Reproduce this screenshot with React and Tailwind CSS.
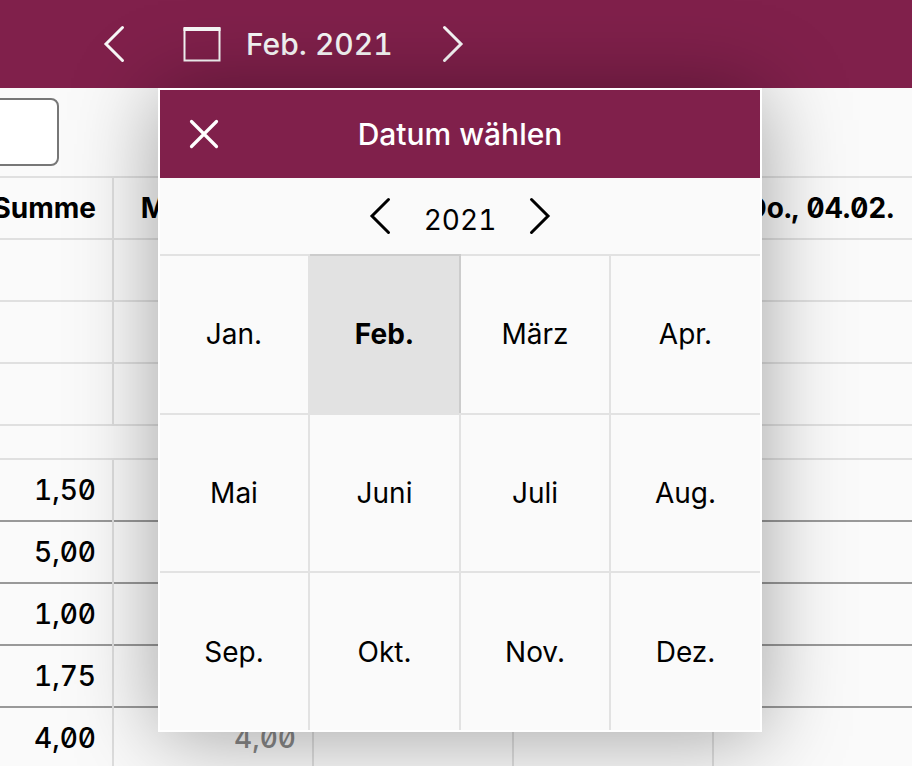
const months = ['Jan.', 'Feb.', 'März', 'Apr.', 'Mai', 'Juni', 'Juli', 'Aug.', 'Sep.', 'Okt.', 'Nov.', 'Dez.'];

const columns = ['Summe', 'Mo., 01.02.', 'Di., 02.02.', 'Mi., 03.02.', 'Do., 04.02.'];

const sums = [
  ['1,50', '', '', '', ''],
  ['5,00', '', '', '', ''],
  ['1,00', '', '', '', ''],
  ['1,75', '', '', '', ''],
  ['4,00', '4,00', '', '', ''],
];

function Chevron({ direction }) {
  return (
    <svg width="24" height="40" viewBox="0 0 24 40" fill="none" stroke="currentColor" strokeWidth="3" strokeLinecap="round" strokeLinejoin="miter" aria-hidden="true">
      <path d={direction === 'left' ? 'M20.5 3.5 4 20l16.5 16.5' : 'M3.5 3.5 20 20 3.5 36.5'} />
    </svg>
  );
}

function TopBar() {
  return (
    <header className="flex h-[88px] items-center bg-[#80204b] pl-[102px] text-[#f8f8f8]">
      <button type="button" aria-label="Voriger Monat">
        <Chevron direction="left" />
      </button>
      <button type="button" className="ml-14 flex items-center gap-6 text-[30px] font-medium tabular-nums">
        <svg width="40" height="40" viewBox="0 0 40 40" fill="none" stroke="currentColor" aria-hidden="true">
          <path d="M1.5 3h37v4h-37z" fill="currentColor" stroke="none" />
          <path d="M2.5 4v32.5h35V4" strokeWidth="2" />
        </svg>
        Feb. 2021
      </button>
      <button type="button" aria-label="Nächster Monat" className="ml-12">
        <Chevron direction="right" />
      </button>
    </header>
  );
}

function Cell({ children, line, muted }) {
  return (
    <td className="border-r-2 border-[#dedede] p-0">
      <div
        className={`flex h-[62px] items-center justify-end border-b-2 pr-4 ${line === 'dark' ? 'border-[#999]' : 'border-[#e0e0e0]'} ${muted ? 'text-[#888]' : ''}`}
      >
        {children}
      </div>
    </td>
  );
}

function TimeTable() {
  return (
    <table className="w-[1000px] table-fixed border-separate border-spacing-0 text-[28px] leading-8 font-medium tabular-nums slashed-zero">
      <thead>
        <tr>
          {columns.map((name, i) => (
            <th key={name} scope="col" className={`border-t-2 border-[#e0e0e0] p-0 font-bold ${i === 0 ? 'border-r-2' : ''}`}>
              <div className={`flex h-[62px] items-center justify-end border-b-2 border-[#e0e0e0] whitespace-nowrap ${i === 0 ? 'pr-4' : 'pr-5'}`}>{name}</div>
            </th>
          ))}
        </tr>
      </thead>
      <tbody>
        {[0, 1, 2].map((row) => (
          <tr key={row}>
            {columns.map((name) => (
              <Cell key={name} />
            ))}
          </tr>
        ))}
        <tr>
          <td colSpan={5} className="p-0">
            <div className="h-[34px] border-b-2 border-[#e0e0e0]" />
          </td>
        </tr>
        {sums.map((row, r) => (
          <tr key={r}>
            {row.map((value, i) => (
              <Cell key={i} line="dark" muted={i > 0}>
                {value}
              </Cell>
            ))}
          </tr>
        ))}
      </tbody>
    </table>
  );
}

function MonthPicker() {
  return (
    <div
      role="dialog"
      aria-label="Datum wählen"
      className="absolute top-[88px] left-[158px] w-[604px] border-2 border-white bg-[#fafafa] shadow-[0_4px_80px_rgba(0,0,0,0.36)]"
    >
      <div className="grid h-[88px] grid-cols-[88px_1fr_88px] items-center bg-[#80204b] text-white">
        <button type="button" aria-label="Schließen" className="flex justify-center">
          <svg width="32" height="32" viewBox="0 0 32 32" fill="none" stroke="currentColor" strokeWidth="3.2" strokeLinecap="round" aria-hidden="true">
            <path d="M3.5 3.5l25 25M28.5 3.5l-25 25" />
          </svg>
        </button>
        <h2 className="text-center text-[30px] font-medium">Datum wählen</h2>
      </div>
      <div className="flex h-[76px] items-center justify-center gap-8 text-[28px] tabular-nums">
        <button type="button" aria-label="Voriges Jahr">
          <Chevron direction="left" />
        </button>
        <span className="pt-2">2021</span>
        <button type="button" aria-label="Nächstes Jahr">
          <Chevron direction="right" />
        </button>
      </div>
      <div className="overflow-hidden">
        <div className="-mr-0.5 grid h-[476px] grid-cols-[150fr_151fr_150fr_151fr] grid-rows-3 text-[28px]">
          {months.map((month) => (
            <button
              key={month}
              type="button"
              className={
                month === 'Feb.'
                  ? 'border-t-2 border-r-2 border-[#cccccc] bg-[#e2e2e2] font-bold'
                  : 'border-t-2 border-r-2 border-[#e2e2e2]'
              }
            >
              {month}
            </button>
          ))}
        </div>
      </div>
    </div>
  );
}

export default function App() {
  return (
    <div className="relative h-screen overflow-hidden bg-[#fafafa] font-['Inter','Liberation_Sans',sans-serif] text-black">
      <TopBar />
      <main className="-ml-[86px]">
        <div className="flex h-[88px] items-center">
          <input type="text" aria-label="Suche" className="h-[68px] w-[145px] rounded-lg border-2 border-[#777] bg-white px-4 text-[28px]" />
        </div>
        <TimeTable />
      </main>
      <MonthPicker />
    </div>
  );
}
